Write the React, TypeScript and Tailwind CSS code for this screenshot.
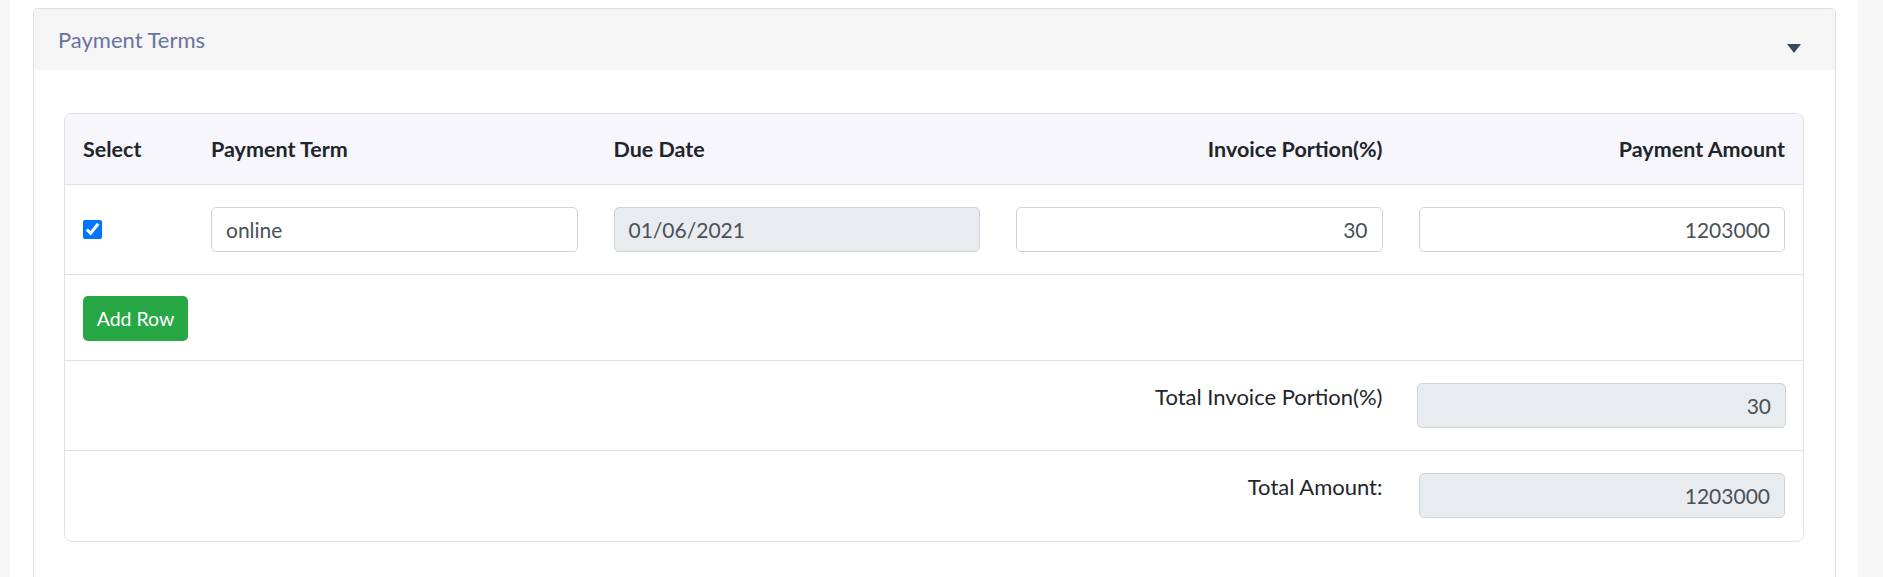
import { useState } from 'react';

const cell = 'px-[18px]';

function TextBox({
  value,
  readOnly = false,
  right = false,
}: {
  value: string;
  readOnly?: boolean;
  right?: boolean;
}) {
  return (
    <div
      className={`h-[45px] w-full flex items-center px-[14px] border border-[#ced4da] rounded-[5px] text-[21px] text-[#495057] ${
        readOnly ? 'bg-[#e9ecef]' : 'bg-white'
      } ${right ? 'justify-end' : 'justify-start'}`}
    >
      {value}
    </div>
  );
}

export default function App() {
  const [checked, setChecked] = useState(true);

  return (
    <div
      className="min-h-[577px] flex bg-white"
      style={{ fontFamily: 'Lato, "Noto Sans", sans-serif' }}
    >
      <div className="w-[10px] shrink-0 bg-[#f7f7f7]" />

      <div className="flex-1 pl-[23px] pr-[22px] pt-[8px]">
        {/* Payment terms card */}
        <div className="border border-b-0 border-[#dfdfdf] rounded-t-[5px] min-h-[569px]">
          <div className="h-[61px] bg-[#f5f5f5] flex items-center justify-between pl-[24px] pr-[34px] rounded-t-[5px]">
            <span className="text-[22px] text-[#6a72a0]">Payment Terms</span>
            <svg width="14" height="9" viewBox="0 0 14 9" className="mt-[17px]">
              <path d="M0 0 H14 L7 9 Z" fill="#34495e" />
            </svg>
          </div>

          <div className="pt-[43px] pl-[30px] pr-[31px]">
            <div className="border border-[#dee2e6] rounded-[8px] text-[22px] text-[#212529]">
              {/* header */}
              <div className="grid grid-cols-[128px_repeat(4,1fr)] h-[71px] items-center bg-[#f7f6fd] border-b border-[#dee2e6] rounded-t-[8px] font-bold text-[21.5px]">
                <div className={cell}>Select</div>
                <div className={cell}>Payment Term</div>
                <div className={cell}>Due Date</div>
                <div className={`${cell} text-right`}>Invoice Portion(%)</div>
                <div className={`${cell} text-right`}>Payment Amount</div>
              </div>

              {/* term row */}
              <div className="grid grid-cols-[128px_repeat(4,1fr)] h-[90px] items-center border-b border-[#dee2e6]">
                <div className={`${cell} flex items-center`}>
                  <input
                    type="checkbox"
                    checked={checked}
                    onChange={() => setChecked(!checked)}
                    className="w-[19px] h-[19px] m-0 accent-[#0075ff]"
                  />
                </div>
                <div className={cell}>
                  <TextBox value="online" />
                </div>
                <div className={cell}>
                  <TextBox value="01/06/2021" readOnly />
                </div>
                <div className={cell}>
                  <TextBox value="30" right />
                </div>
                <div className={cell}>
                  <TextBox value="1203000" right />
                </div>
              </div>

              {/* add row */}
              <div className="h-[86px] flex items-start pt-[21px] px-[18px] border-b border-[#dee2e6]">
                <button
                  type="button"
                  className="w-[105px] h-[45px] rounded-[5px] bg-[#28a745] text-white text-[19.5px]"
                >
                  Add Row
                </button>
              </div>

              {/* totals */}
              <div className="grid grid-cols-[128px_repeat(4,1fr)] h-[90px] items-start pt-[22px] border-b border-[#dee2e6]">
                <div className="col-span-4 px-[18px] text-right leading-[28px]">Total Invoice Portion(%)</div>
                <div className="pl-[16px] pr-[17px]">
                  <TextBox value="30" readOnly right />
                </div>
              </div>
              <div className="grid grid-cols-[128px_repeat(4,1fr)] h-[90px] items-start pt-[22px]">
                <div className="col-span-4 px-[18px] text-right leading-[28px]">Total Amount:</div>
                <div className={cell}>
                  <TextBox value="1203000" readOnly right />
                </div>
              </div>
            </div>
          </div>
        </div>
      </div>

      <div className="w-[25px] shrink-0 bg-[#f7f7f7]" />
    </div>
  );
}
